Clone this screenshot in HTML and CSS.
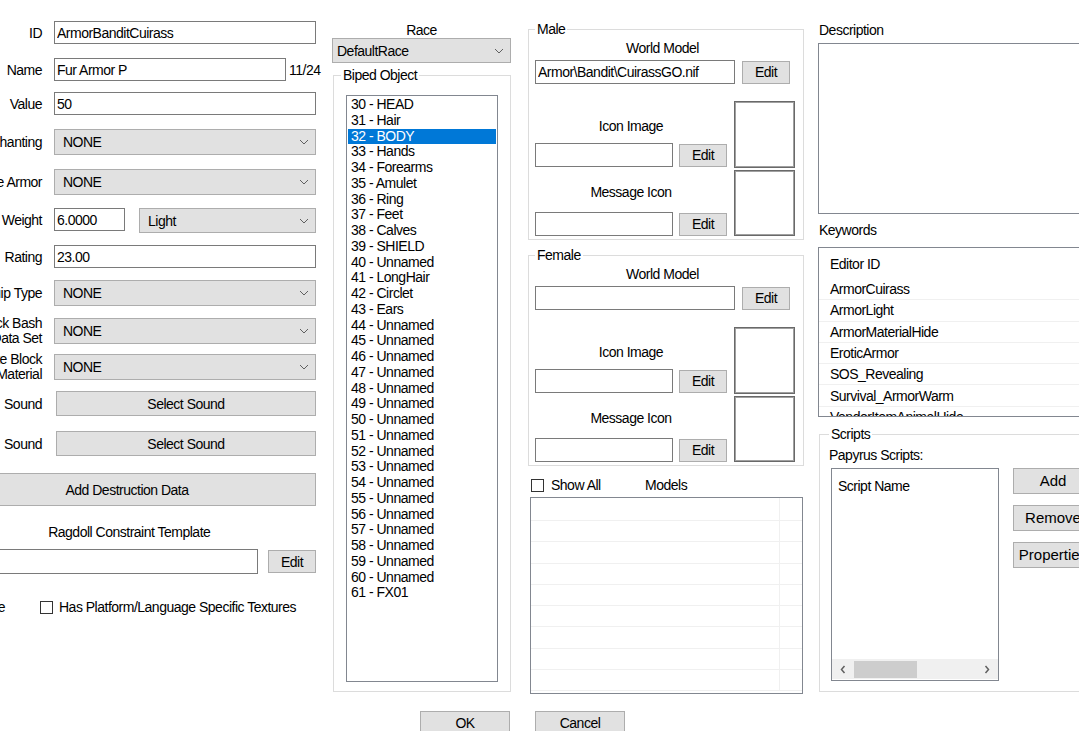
FILE: index.html
```html
<!DOCTYPE html>
<html lang="en">
<head>
    <meta charset="UTF-8">
    <title>Armor</title>
    <link rel="stylesheet" href="styles.css">
</head>
<body>
<div class="dialog">

    <!-- main fields -->
    <div class="col col-main">
        <div class="field"><label class="lbl"><span>ID</span></label><input class="edit w-wide" value="ArmorBanditCuirass"></div>
        <div class="field"><label class="lbl"><span>Name</span></label><input class="edit w-name" value="Fur Armor P"><span class="count">11/24</span></div>
        <div class="field"><label class="lbl"><span>Value</span></label><input class="edit w-wide" value="50"></div>
        <div class="field"><label class="lbl"><span>Enchanting</span></label>
            <div class="combo w-wide"><span>NONE</span><svg class="chev" width="10" height="6" viewBox="0 0 10 6"><path d="M1 1l4 4 4-4" fill="none" stroke="#606060"/></svg></div></div>
        <div class="field"><label class="lbl"><span>Template Armor</span></label>
            <div class="combo w-wide"><span>NONE</span><svg class="chev" width="10" height="6" viewBox="0 0 10 6"><path d="M1 1l4 4 4-4" fill="none" stroke="#606060"/></svg></div></div>
        <div class="field top"><label class="lbl"><span>Weight</span></label><input class="edit w-weight" value="6.0000">
            <div class="combo w-class"><span>Light</span><svg class="chev" width="10" height="6" viewBox="0 0 10 6"><path d="M1 1l4 4 4-4" fill="none" stroke="#606060"/></svg></div></div>
        <div class="field"><label class="lbl"><span>Armor&nbsp; Rating</span></label><input class="edit w-wide" value="23.00"></div>
        <div class="field"><label class="lbl"><span>Equip Type</span></label>
            <div class="combo w-wide"><span>NONE</span><svg class="chev" width="10" height="6" viewBox="0 0 10 6"><path d="M1 1l4 4 4-4" fill="none" stroke="#606060"/></svg></div></div>
        <div class="field"><label class="lbl two"><span>Block Bash<br>Data Set</span></label>
            <div class="combo w-wide"><span>NONE</span><svg class="chev" width="10" height="6" viewBox="0 0 10 6"><path d="M1 1l4 4 4-4" fill="none" stroke="#606060"/></svg></div></div>
        <div class="field"><label class="lbl two"><span>Alternate Block<br>Material</span></label>
            <div class="combo w-wide"><span>NONE</span><svg class="chev" width="10" height="6" viewBox="0 0 10 6"><path d="M1 1l4 4 4-4" fill="none" stroke="#606060"/></svg></div></div>
        <div class="field"><label class="lbl"><span>Pickup&nbsp; Sound</span></label><button class="btn sound">Select Sound</button></div>
        <div class="field"><label class="lbl"><span>Putdown&nbsp; Sound</span></label><button class="btn sound">Select Sound</button></div>
        <button class="btn destruct">Add Destruction Data</button>
        <div class="cap">Ragdoll Constraint Template</div>
        <div class="field"><input class="edit ragdoll"><button class="btn edit-btn ragdoll-edit">Edit</button></div>
        <div class="checks">
            <label class="chk clip"><span class="box"></span>Playable</label>
            <label class="chk platform"><span class="box"></span>Has Platform/Language Specific Textures</label>
        </div>
    </div>

    <!-- race / biped -->
    <div class="col col-race">
        <div class="cap">Race</div>
        <div class="combo combo-race"><span>DefaultRace</span><svg class="chev" width="10" height="6" viewBox="0 0 10 6"><path d="M1 1l4 4 4-4" fill="none" stroke="#606060"/></svg></div>
        <fieldset class="group biped">
            <legend>Biped Object</legend>
            <ul class="listbox">
                <li>30 - HEAD</li>
                <li>31 - Hair</li>
                <li class="sel">32 - BODY</li>
                <li>33 - Hands</li>
                <li>34 - Forearms</li>
                <li>35 - Amulet</li>
                <li>36 - Ring</li>
                <li>37 - Feet</li>
                <li>38 - Calves</li>
                <li>39 - SHIELD</li>
                <li>40 - Unnamed</li>
                <li>41 - LongHair</li>
                <li>42 - Circlet</li>
                <li>43 - Ears</li>
                <li>44 - Unnamed</li>
                <li>45 - Unnamed</li>
                <li>46 - Unnamed</li>
                <li>47 - Unnamed</li>
                <li>48 - Unnamed</li>
                <li>49 - Unnamed</li>
                <li>50 - Unnamed</li>
                <li>51 - Unnamed</li>
                <li>52 - Unnamed</li>
                <li>53 - Unnamed</li>
                <li>54 - Unnamed</li>
                <li>55 - Unnamed</li>
                <li>56 - Unnamed</li>
                <li>57 - Unnamed</li>
                <li>58 - Unnamed</li>
                <li>59 - Unnamed</li>
                <li>60 - Unnamed</li>
                <li>61 - FX01</li>
            </ul>
        </fieldset>
    </div>

    <!-- male / female models -->
    <div class="col col-models">
        <fieldset class="group model">
            <legend>Male</legend>
            <div class="cap wm">World Model</div>
            <div class="path-row"><input class="edit path" value="Armor\Bandit\CuirassGO.nif"><button class="btn edit-btn">Edit</button></div>
            <div class="icons">
                <div class="icon-fields">
                    <div class="cap">Icon Image</div>
                    <div class="icon-row"><input class="edit small"><button class="btn edit-btn">Edit</button></div>
                    <div class="cap msg">Message Icon</div>
                    <div class="icon-row last"><input class="edit small"><button class="btn edit-btn">Edit</button></div>
                </div>
                <div class="previews"><div class="preview"></div><div class="preview"></div></div>
            </div>
        </fieldset>
        <fieldset class="group model female">
            <legend>Female</legend>
            <div class="cap wm">World Model</div>
            <div class="path-row"><input class="edit path"><button class="btn edit-btn">Edit</button></div>
            <div class="icons">
                <div class="icon-fields">
                    <div class="cap">Icon Image</div>
                    <div class="icon-row"><input class="edit small"><button class="btn edit-btn">Edit</button></div>
                    <div class="cap msg">Message Icon</div>
                    <div class="icon-row last"><input class="edit small"><button class="btn edit-btn">Edit</button></div>
                </div>
                <div class="previews"><div class="preview"></div><div class="preview"></div></div>
            </div>
        </fieldset>
        <div class="models-bar">
            <label class="chk showall"><span class="box"></span>Show All</label>
            <span>Models</span>
        </div>
        <div class="listview models">
            <div class="mrow"><span></span></div>
            <div class="mrow"><span></span></div>
            <div class="mrow"><span></span></div>
            <div class="mrow"><span></span></div>
            <div class="mrow"><span></span></div>
            <div class="mrow"><span></span></div>
            <div class="mrow"><span></span></div>
            <div class="mrow"><span></span></div>
            <div class="mrow"><span></span></div>
        </div>
    </div>

    <!-- description / keywords / scripts -->
    <div class="col col-desc">
        <div class="cap-left">Description</div>
        <textarea class="desc"></textarea>
        <div class="cap-left kw">Keywords</div>
        <div class="listview keywords">
            <div class="lv-head">Editor ID</div>
            <div class="lv-row">ArmorCuirass</div>
            <div class="lv-row">ArmorLight</div>
            <div class="lv-row">ArmorMaterialHide</div>
            <div class="lv-row">EroticArmor</div>
            <div class="lv-row">SOS_Revealing</div>
            <div class="lv-row">Survival_ArmorWarm</div>
            <div class="lv-row">VendorItemAnimalHide</div>
        </div>
        <fieldset class="group scripts">
            <legend>Scripts</legend>
            <div class="papyrus">Papyrus Scripts:</div>
            <div class="script-body">
                <div class="script-list">
                    <div class="sl-head">Script Name</div>
                    <div class="hscroll">
                        <span class="arrow"><svg width="6" height="9" viewBox="0 0 6 9"><path d="M4.5 1L1.5 4.5 4.5 8" fill="none" stroke="#606060" stroke-width="1.5"/></svg></span>
                        <span class="thumb"></span>
                        <span class="arrow right"><svg width="6" height="9" viewBox="0 0 6 9"><path d="M1.5 1L4.5 4.5 1.5 8" fill="none" stroke="#606060" stroke-width="1.5"/></svg></span>
                    </div>
                </div>
                <div class="script-btns">
                    <button class="btn sbtn">Add</button>
                    <button class="btn sbtn">Remove</button>
                    <button class="btn sbtn">Properties</button>
                </div>
            </div>
        </fieldset>
    </div>
</div>

<div class="footer">
    <button class="btn dlg-btn">OK</button>
    <button class="btn dlg-btn">Cancel</button>
</div>
</body>
</html>
```

FILE: styles.css
```css
* {
    box-sizing: border-box;
}

html, body {
    margin: 0;
    height: 100%;
}

body {
    background: #fff;
    color: #000;
    font-family: "Liberation Sans", Arial, sans-serif;
    font-size: 14px;
    letter-spacing: -0.5px;
    line-height: 16px;
    overflow: hidden;
}

/* common win32-ish controls */
.edit {
    font: inherit;
    letter-spacing: inherit;
    color: #000;
    height: 24px;
    border: 1px solid #7a7a7a;
    background: #fff;
    padding: 0 2px;
    outline: none;
}

.combo {
    height: 26px;
    border: 1px solid #adadad;
    background: #e1e1e1;
    display: flex;
    align-items: center;
    justify-content: space-between;
    padding: 0 6px 0 8px;
    white-space: nowrap;
}

.btn {
    font: inherit;
    letter-spacing: inherit;
    color: #000;
    border: 1px solid #adadad;
    background: #e1e1e1;
    display: flex;
    align-items: center;
    justify-content: center;
    padding: 0;
    height: 25px;
}

.edit-btn {
    width: 48px;
    height: 23px;
    margin-left: 7px;
}

.cap {
    text-align: center;
    line-height: 16px;
}

.box {
    display: inline-block;
    width: 13px;
    height: 13px;
    border: 1px solid #333;
    background: #fff;
    flex: none;
}

.chk {
    display: flex;
    align-items: center;
    gap: 6px;
    white-space: nowrap;
}

.group {
    margin: 0;
    border: 1px solid #dcdcdc;
    min-width: 0;
}

.group legend {
    padding: 0 2px;
    line-height: 16px;
}

.listview, .listbox, .desc, .script-list {
    border: 1px solid #828790;
    background: #fff;
}

/* layout */
.dialog {
    display: flex;
    height: 711px;
    margin-left: -62px;
}

.col-main {
    width: 378px;
    flex: none;
    display: grid;
    padding-top: 21px;
    grid-template-rows: 37px 34px 37px 40px 39px 37px 35px 36px 36px 39px 40px 42px 51px 25px 50px auto;
    align-items: start;
}

.field {
    display: flex;
    align-items: center;
}

.field.top {
    align-items: flex-start;
}

.lbl {
    width: 104px;
    margin-right: 12px;
    display: flex;
    justify-content: flex-end;
    white-space: nowrap;
    text-align: right;
    flex: none;
}

.field.top .lbl {
    margin-top: 4px;
}

.lbl.two {
    line-height: 15px;
}

.w-wide { width: 262px; }
.w-name { width: 232px; height: 23px; }
.w-weight { width: 71px; height: 23px; }
.w-class { width: 177px; margin-left: 14px; height: 25px; }
.w-wide.edit { height: 23px; }

.count {
    margin-left: 3px;
}

.sound {
    width: 260px;
    margin-left: 2px;
}

.destruct {
    width: 378px;
    height: 33px;
}

.ragdoll {
    width: 320px;
    height: 25px;
}

.ragdoll-edit {
    margin-left: 10px;
}

.checks {
    display: flex;
    align-items: center;
    height: 16px;
}

.clip {
    width: 67px;
    justify-content: flex-end;
}

.platform {
    margin-left: 35px;
}

/* race / biped */
.col-race {
    width: 179px;
    flex: none;
    margin-left: 16px;
    padding-top: 22px;
}

.combo-race {
    height: 25px;
    padding-left: 4px;
}

.biped {
    margin: 4px 0 0 1px;
    height: 625px;
    padding: 12px 0 9px 7px;
}

.listbox {
    list-style: none;
    margin: 0 0 0 5px;
    padding: 1px;
    width: 152px;
    height: 587px;
    line-height: 15.75px;
    overflow: hidden;
}

.listbox li {
    padding-left: 3px;
    white-space: nowrap;
}

.listbox .sel {
    background: #0078d7;
    color: #fff;
}

/* models */
.col-models {
    width: 276px;
    flex: none;
    margin-left: 17px;
    padding-top: 21px;
}

.model {
    padding: 0 6px 3px;
}

.female {
    margin-top: 7px;
}

.wm {
    width: 255px;
    margin-top: 3px;
}

.path-row, .icon-row {
    display: flex;
    align-items: center;
    margin-top: 4px;
}

.path {
    width: 200px;
}

.icons {
    display: flex;
    margin-top: 17px;
}

.icon-fields {
    width: 192px;
    padding-top: 17px;
}

.icon-row {
    margin-top: 9px;
}

.icon-row .edit-btn {
    margin-left: 6px;
}

.msg {
    margin-top: 17px;
}

.icon-row.last {
    margin-top: 12px;
}

.small {
    width: 138px;
}

.previews {
    margin-left: 7px;
    display: flex;
    flex-direction: column;
    gap: 2px;
}

.preview {
    width: 61px;
    height: 67px;
    border: 1px solid #696969;
    box-shadow: inset 0 0 0 1px #a0a0a0;
}

.preview + .preview {
    height: 66px;
}

.models-bar {
    display: flex;
    align-items: center;
    height: 16px;
    margin-top: 11px;
    padding-left: 3px;
}

.showall {
    width: 114px;
    gap: 7px;
}

.models {
    margin: 4px 0 0 2px;
    width: 273px;
    height: 197px;
    overflow: hidden;
}

.mrow {
    height: 21.3px;
    border-bottom: 1px solid #f0f0f0;
    display: flex;
}

.mrow:first-child {
    height: 23px;
}

.mrow span {
    width: 249px;
    border-right: 1px solid #f0f0f0;
}

/* description / keywords / scripts */
.col-desc {
    width: 300px;
    flex: none;
    margin-left: 14px;
    padding-top: 22px;
}

.cap-left {
    padding-left: 1px;
    line-height: 16px;
}

.desc {
    display: block;
    width: 300px;
    height: 171px;
    margin-top: 5px;
    resize: none;
    outline: none;
}

.kw {
    margin-top: 8px;
}

.keywords {
    margin-top: 9px;
    height: 170px;
    overflow: hidden;
}

.lv-head {
    height: 31px;
    display: flex;
    align-items: center;
    padding-left: 11px;
}

.lv-row {
    height: 21.3px;
    border-bottom: 1px solid #f0f0f0;
    display: flex;
    align-items: center;
    padding-left: 11px;
    white-space: nowrap;
}

.scripts {
    margin: 9px 0 0 1px;
    height: 266px;
    padding: 0 0 0 9px;
}

.papyrus {
    margin-top: 5px;
}

.script-body {
    display: flex;
    margin-top: 5px;
}

.script-list {
    margin-left: 2px;
    width: 168px;
    height: 213px;
    display: flex;
    flex-direction: column;
}

.sl-head {
    padding: 9px 6px 0;
}

.hscroll {
    margin-top: auto;
    margin-bottom: 1px;
    height: 20px;
    background: #f0f0f0;
    display: flex;
    align-items: center;
}

.arrow {
    width: 22px;
    display: flex;
    justify-content: center;
}

.thumb {
    width: 63px;
    height: 17px;
    background: #cdcdcd;
}

.arrow.right {
    margin-left: auto;
}

.script-btns {
    margin-left: 14px;
    display: flex;
    flex-direction: column;
    gap: 11px;
}

.sbtn {
    width: 80px;
    height: 26px;
    font-size: 15px;
    letter-spacing: normal;
}

/* ok / cancel */
.footer {
    display: flex;
    gap: 25px;
    padding-left: 420px;
}

.dlg-btn {
    width: 90px;
    height: 24px;
}
```
